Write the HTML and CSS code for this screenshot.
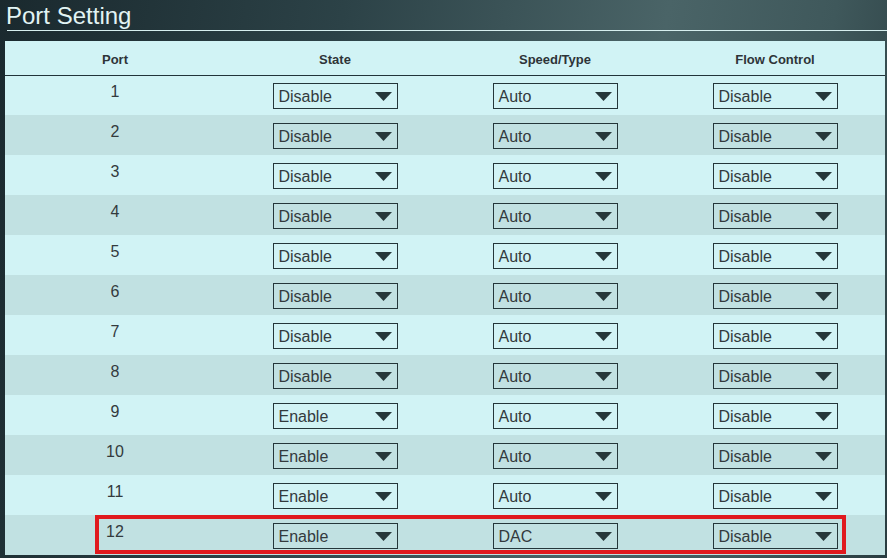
FILE: index.html
```html
<!DOCTYPE html>
<html>
<head>
<meta charset="utf-8">
<link rel="stylesheet" href="styles.css">
</head>
<body>
<div class="page">
  <h1 class="title">Port Setting</h1>
  <div class="table">
    <div class="row head">
      <div class="th">Port</div>
      <div class="th">State</div>
      <div class="th">Speed/Type</div>
      <div class="th">Flow Control</div>
    </div>
    <div id="rows"></div>
  </div>
</div>
<script src="app.js"></script>
</body>
</html>
```
FILE: styles.css
```css
html, body {
  margin: 0;
  padding: 0;
}
body {
  width: 887px;
  height: 558px;
  overflow: hidden;
  font-family: "Liberation Sans", Arial, sans-serif;
  background: linear-gradient(100deg, #1a292e 0%, #2c4247 35%, #4a6467 68%, #3f585b 85%, #2a3d41 100%);
}
.page {
  display: flex;
  flex-direction: column;
}
.title {
  margin: 0 0 0 7px;
  padding: 2px 0 0 0;
  text-indent: -1px;
  font-size: 24px;
  line-height: 28px;
  font-weight: normal;
  color: #e2f4f4;
  border-bottom: 1px solid #d6eeee;
}
.table {
  margin: 10px 2px 0 5px;
  width: 880px;
  display: flex;
  flex-direction: column;
}
.row {
  display: grid;
  grid-template-columns: repeat(4, 220px);
  height: 40px;
  box-sizing: border-box;
  background: #d1f3f5;
  position: relative;
}
.row.alt {
  background: #c1e1e2;
}
.row.first {
  border-top: 1px solid #22343a;
  height: 40px;
}
.row.first .cell {
  padding-top: 7px;
}
.row.head {
  height: 34px;
  padding-top: 2px;
  align-items: center;
}
.th {
  text-align: center;
  font-size: 13px;
  font-weight: bold;
  color: #2e3438;
}
.cell {
  padding-top: 8px;
  display: flex;
  justify-content: center;
  align-items: flex-start;
}
.num {
  font-size: 16px;
  line-height: 18px;
  color: #333a3d;
}
.sel {
  width: 125px;
  height: 26px;
  box-sizing: border-box;
  border: 1px solid #24363a;
  display: flex;
  align-items: center;
  justify-content: space-between;
  padding: 0 5px 0 5px;
  font-size: 16px;
  line-height: 24px;
  color: #333a3d;
}
.sel span {
  padding-top: 1px;
}
.sel svg {
  width: 17px;
  height: 9px;
  display: block;
  margin-top: 1px;
}
.highlight {
  position: absolute;
  left: 90px;
  top: 0;
  width: 751px;
  height: 39px;
  box-sizing: border-box;
  border: 4px solid #e0191e;
  pointer-events: none;
}
```
FILE: app.js
```javascript
const data = [
  ["1","Disable","Auto","Disable"],
  ["2","Disable","Auto","Disable"],
  ["3","Disable","Auto","Disable"],
  ["4","Disable","Auto","Disable"],
  ["5","Disable","Auto","Disable"],
  ["6","Disable","Auto","Disable"],
  ["7","Disable","Auto","Disable"],
  ["8","Disable","Auto","Disable"],
  ["9","Enable","Auto","Disable"],
  ["10","Enable","Auto","Disable"],
  ["11","Enable","Auto","Disable"],
  ["12","Enable","DAC","Disable"]
];
const arrow = '<svg viewBox="0 0 17 9"><polygon points="0,0 17,0 8.5,9" fill="#26373a"/></svg>';
const rows = document.getElementById('rows');
let html = '';
data.forEach((r, i) => {
  const cls = ['row'];
  if (i === 0) cls.push('first');
  if (i % 2 === 1) cls.push('alt');
  html += '<div class="' + cls.join(' ') + '">';
  html += '<div class="cell"><span class="num">' + r[0] + '</span></div>';
  for (let k = 1; k < 4; k++) {
    html += '<div class="cell"><div class="sel"><span>' + r[k] + '</span>' + arrow + '</div></div>';
  }
  if (i === data.length - 1) html += '<div class="highlight"></div>';
  html += '</div>';
});
rows.innerHTML = html;
```
